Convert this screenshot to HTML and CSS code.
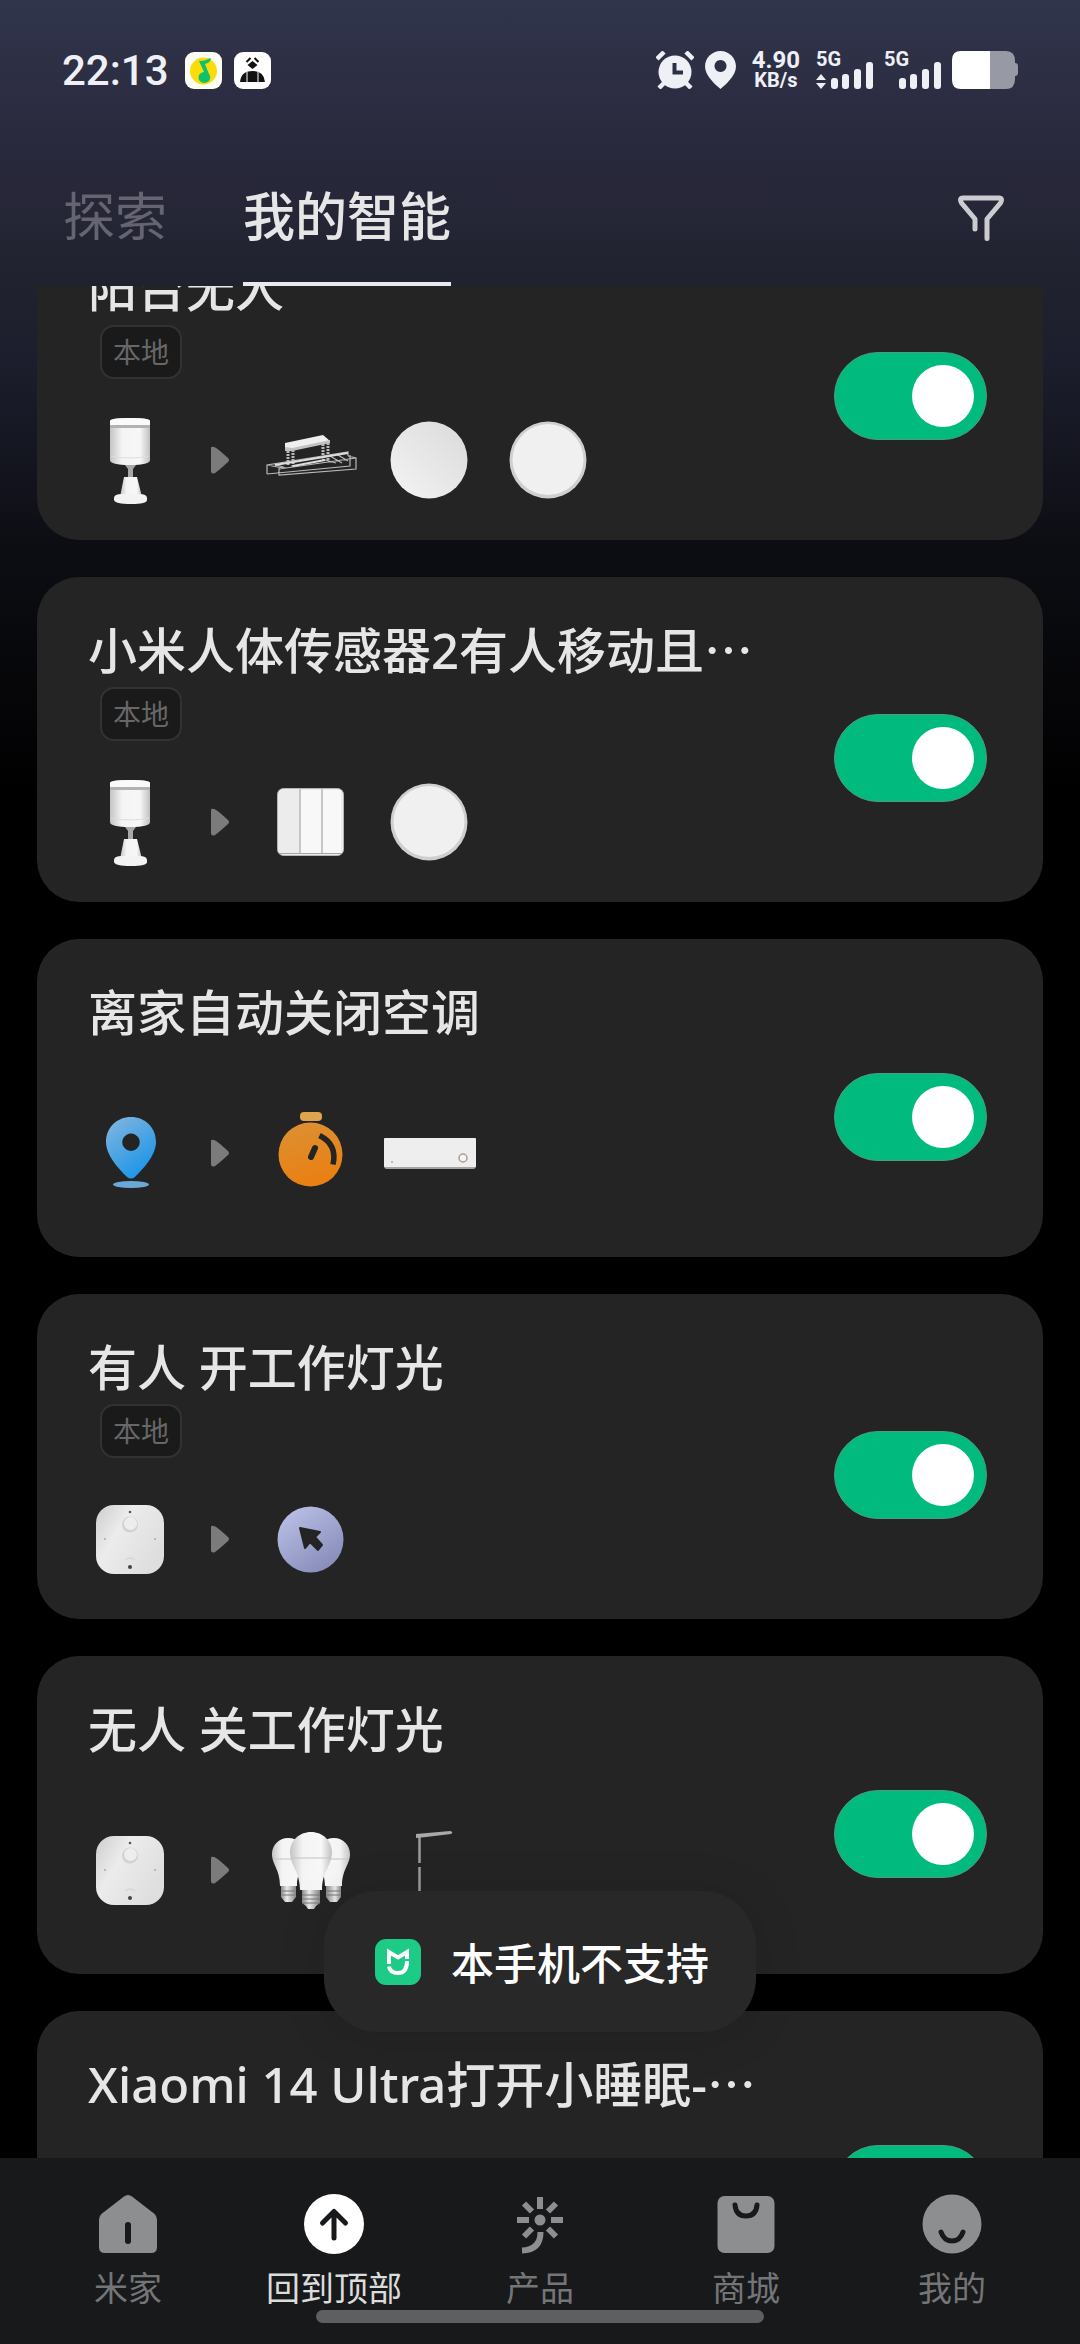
FILE: index.html
```html
<!DOCTYPE html>
<html lang="zh-CN">
<head>
  <meta charset="UTF-8" />
  <meta name="viewport" content="width=device-width, initial-scale=1.0" />
  <title>我的智能</title>
  <link rel="stylesheet" href="styles.css">
</head>
<body>
  <!-- Shared device icons -->
  <svg class="sprite" aria-hidden="true">
    <defs>
      <linearGradient id="g-body" x1="0" x2="1" y1="0" y2="0">
        <stop offset="0" stop-color="#c4c4c4" />
        <stop offset="0.3" stop-color="#f4f4f4" />
        <stop offset="0.75" stop-color="#f7f7f7" />
        <stop offset="1" stop-color="#c0c0c0" />
      </linearGradient>
      <linearGradient id="g-disc" x1="1" x2="0" y1="0" y2="1">
        <stop offset="0" stop-color="#dadada" />
        <stop offset="1" stop-color="#f4f4f4" />
      </linearGradient>
      <linearGradient id="g-pin" x1="0.2" x2="0.8" y1="0" y2="1">
        <stop offset="0" stop-color="#7db4de" />
        <stop offset="1" stop-color="#1492ea" />
      </linearGradient>
      <linearGradient id="g-timer" x1="0" x2="0.3" y1="0" y2="1">
        <stop offset="0" stop-color="#dc9136" />
        <stop offset="1" stop-color="#e98012" />
      </linearGradient>
      <linearGradient id="g-tap" x1="0.2" x2="0.9" y1="0" y2="1">
        <stop offset="0" stop-color="#b9bfe6" />
        <stop offset="1" stop-color="#8288b4" />
      </linearGradient>
      <linearGradient id="g-panel" x1="0" x2="1" y1="0" y2="0.6">
        <stop offset="0" stop-color="#cdcdcd" />
        <stop offset="0.4" stop-color="#ececec" />
        <stop offset="1" stop-color="#dedede" />
      </linearGradient>
      <linearGradient id="g-screw" x1="0" x2="1" y1="0" y2="0">
        <stop offset="0" stop-color="#8a8a8a" />
        <stop offset="0.4" stop-color="#ececec" />
        <stop offset="1" stop-color="#858585" />
      </linearGradient>
      <g id="side-bulb">
        <path fill="url(#g-screw)" d="M19 63h15v12l-4 5h-7l-4-5z" />
        <path fill="url(#g-body)" d="M26 16c10 0 17 7 17 16 0 12-8 16-8 32H18c0-17-8-21-8-32 0-9 7-16 16-16z" />
        <path stroke="#c4c4c4" d="M11 37h20" />
        <path stroke="#777" d="M20 69h13M20 73h13" />
      </g>
    </defs>

    <symbol id="motion" viewBox="0 0 96 96">
      <path fill="url(#g-body)" d="M28 9q0-3 20-3t20 3v39q0 5-20 5t-20-5z" />
      <path fill="#b2b2b2" d="M28 13h40v3H28z" />
      <path fill="#fafafa" d="M28 9q0-3 20-3t20 3v4H28z" />
      <path fill="none" stroke="#dedede" d="M29 44q19 4 38 0" />
      <path fill="#a8a8a8" d="M43 53h11l-3 4v9h-5v-9z" />
      <path fill="url(#g-body)" d="M42 65h13l5 20H38z" />
      <path fill="#f3f3f3" d="M32 86q0-4 8-4h17q8 0 8 4v2q0 4-16 4t-17-4z" />
    </symbol>

    <symbol id="rack" viewBox="0 0 96 96">
      <path fill="#efefef" d="M23 31l38-8 7 6-38 9h-7z" />
      <path fill="#c2c2c2" d="M23 35l7 1 38-8v3l-38 8h-7z" />
      <g fill="none" stroke="#b9b9b9" stroke-width="1.2">
        <path stroke-dasharray="2 1" stroke-width="3" d="M26 39v15M31 38v17M61 32v15M66 31v17" />
        <path d="M5 62v-9l81-13v4M5 53l16 3M5 62l83-8V43M17 56v7l77-6V46l-8-2M17 57l77-11M12 52l12 4M76 43l10 6M68 44l12 7M60 47l14 4" />
      </g>
      <path fill="none" stroke="#dedede" stroke-width="2" d="M13 53l73-12M31 54l32-6" />
    </symbol>

    <symbol id="ceiling" viewBox="0 0 96 96">
      <circle cx="48" cy="48" r="38.5" fill="url(#g-disc)" />
    </symbol>

    <symbol id="ceiling-ring" viewBox="0 0 96 96">
      <circle cx="48" cy="48" r="38.5" fill="#cfcfcf" />
      <circle cx="48" cy="47.5" r="35.5" fill="#f0f0f0" />
    </symbol>

    <symbol id="switch" viewBox="0 0 96 96">
      <rect x="15.5" y="14.5" width="66" height="67" rx="6" fill="#ececec" stroke="#b5b5b5" />
      <path fill="#f8f8f8" d="M39 16h20v63H39zM61 16h18v63H61z" />
      <path stroke="#b9b9b9" stroke-width="1.5" d="M38 15v65M60 15v65" />
      <path stroke="#a5a5a5" d="M17 79.5h63" />
    </symbol>

    <symbol id="place" viewBox="0 0 96 96">
      <path fill="url(#g-pin)" fill-rule="evenodd" d="M49 12c14 0 25 10.5 25 25 0 13-12 26-21 35q-4 3-8 0C36 63 24 50 24 37c0-14.5 11-25 25-25zm0 16.5a8.7 8.7 0 1 0 .01 0z" />
      <ellipse cx="49" cy="79.5" rx="18" ry="3.5" fill="#6aa8d8" />
    </symbol>

    <symbol id="timer" viewBox="0 0 96 96">
      <rect x="38" y="7" width="22" height="9" rx="4" fill="#dfa44e" />
      <circle cx="48.5" cy="49.5" r="32" fill="url(#g-timer)" />
      <path fill="none" stroke="#242424" stroke-width="6" stroke-linecap="round" d="M49 52l4-9" />
      <path fill="none" stroke="#242424" stroke-width="5.5" d="M57.5 30.5q18 9 13.5 29" />
    </symbol>

    <symbol id="aircon" viewBox="0 0 96 96">
      <path fill="#a3a3a3" d="M3 59h92v2q0 3-3 3H6q-3 0-3-3z" />
      <rect x="3" y="33" width="92" height="29" rx="1" fill="#eeeeee" />
      <circle cx="82" cy="53" r="4" fill="#f4f4f4" stroke="#b09c94" stroke-width="1.5" />
      <circle cx="11" cy="57" r="1" fill="#a9a9a9" />
    </symbol>

    <symbol id="presence" viewBox="0 0 96 96">
      <rect x="14" y="14" width="68" height="69" rx="18" fill="url(#g-panel)" />
      <circle cx="48" cy="33.5" r="8" fill="#d2d2d2" />
      <circle cx="48.5" cy="32.5" r="6.5" fill="#ededed" />
      <circle cx="48" cy="21" r="1.3" fill="#555" />
      <circle cx="48" cy="76" r="2" fill="#444" />
      <circle cx="23" cy="48" r="1" fill="#aaa" />
      <circle cx="73" cy="48" r="1" fill="#aaa" />
      <path fill="none" stroke="#cfcfcf" d="M43 69q5-4 10 0" />
    </symbol>

    <symbol id="tap" viewBox="0 0 96 96">
      <circle cx="48.5" cy="48.5" r="33" fill="url(#g-tap)" />
      <path fill="#242424" stroke="#242424" stroke-width="2" stroke-linejoin="round" d="M38 37l20 4-5 5 7 8-4 5-8-8-5 6z" />
    </symbol>

    <symbol id="bulbs" viewBox="0 0 96 96">
      <use href="#side-bulb" />
      <use href="#side-bulb" transform="matrix(-1 0 0 1 98 0)" />
      <path fill="url(#g-screw)" d="M40 67h18v14l-4 3-2 3h-6l-2-3-4-3z" />
      <path fill="url(#g-body)" d="M49 10c12 0 21 9 21 20 0 14-10 19-10 38H38c0-19-10-24-10-38 0-11 9-20 21-20z" />
      <path stroke="#c2c2c2" d="M29 36h40" />
      <path stroke="#777" d="M40 73h18M40 77h18M41 81h16" />
    </symbol>

    <symbol id="lamp" viewBox="0 0 96 96">
      <path stroke="#9b9b9b" stroke-width="2.5" d="M38.5 14v72" />
      <path stroke="#222" stroke-width="3" d="M38.5 41v4" />
      <path fill="#a9a9a9" d="M35 12l34-3q4 1 1 3l-25 3-10 1z" />
      <ellipse cx="42" cy="87" rx="14" ry="3" fill="#9b9b9b" />
    </symbol>

    <symbol id="arrow" viewBox="0 0 18 28">
      <path fill="#7b7b7b" d="M0 2q0-2 3-1 2 0 14 11 2 2 0 4Q5 27 3 27.5q-3 .5-3-2z" />
    </symbol>
  </svg>

  <div class="app">
    <header class="top">
      <div class="status-bar">
        <time class="clock">22:13</time>
        <svg class="notice" viewBox="0 0 37 37" width="37" height="37">
          <rect width="37" height="37" rx="9" fill="#fdfff4" />
          <circle cx="18.5" cy="19" r="13.5" fill="#fadc0a" />
          <path fill="#11c06c" d="M14 9q7 0 11-3l1 1q-1 4-6 5l4 10a6 5.5 0 1 1-5-2z" />
        </svg>
        <svg class="notice" viewBox="0 0 37 37" width="37" height="37">
          <rect width="37" height="37" rx="9" fill="#fff" />
          <path fill="#111" d="M18.5 9l5 4-5 4-5-4zM6 30q1-11 12.500-11T31 30z" />
          <path stroke="#111" stroke-width="2" d="M12.500 10l4-4M24.500 10l-4-4" />
          <path stroke="#fff" d="M13 20v10M24 20v10" />
        </svg>
        <div class="status-right">
          <svg viewBox="0 0 38 38" width="38" height="38">
            <circle cx="19" cy="21" r="16.5" fill="#eef0f6" />
            <path stroke="#eef0f6" stroke-width="4.5" d="M1 8l7-7M37 8l-7-7M3 37l6-6M35 37l-6-6" />
            <path fill="none" stroke="#2d3045" stroke-width="4" d="M18.5 12v9.5H27" />
          </svg>
          <svg viewBox="0 0 31 38" width="31" height="38">
            <path fill="#eef0f6" fill-rule="evenodd" d="M15.5 0C24 0 31 7 31 15.5 31 25 20 34 15.5 38 11 34 0 25 0 15.5 0 7 7 0 15.5 0zm0 9a6 6 0 1 0 .01 0z" />
          </svg>
          <div class="speed">
            <span class="rate">4.90</span>
            <span class="unit">KB/s</span>
          </div>
          <div class="signal">
            <span class="network">5G</span>
            <svg viewBox="0 0 57 27" width="57" height="27" fill="#eef0f6">
              <path d="M5 12l5 6H0zM5 27l5-6H0z" />
              <rect x="15" y="16" width="7" height="11" rx="3" />
              <rect x="26" y="12" width="7" height="15" rx="3" />
              <rect x="38" y="7" width="7" height="20" rx="3" />
              <rect x="50" y="0" width="7" height="27" rx="3" />
            </svg>
          </div>
          <div class="signal">
            <span class="network">5G</span>
            <svg viewBox="0 0 57 27" width="57" height="27" fill="#eef0f6">
              <rect x="15" y="16" width="7" height="11" rx="3" />
              <rect x="26" y="12" width="7" height="15" rx="3" />
              <rect x="38" y="7" width="7" height="20" rx="3" />
              <rect x="50" y="0" width="7" height="27" rx="3" />
            </svg>
          </div>
          <svg viewBox="0 0 66 38" width="66" height="38">
            <path fill="#9799a5" d="M38 0h16q9 0 9 10v2q3 0 3 3v7q0 3-3 3v3q0 10-9 10H38z" />
            <path fill="#fff" d="M9 0h29v38H9q-9 0-9-9V9q0-9 9-9z" />
          </svg>
        </div>
      </div>

      <div class="tabs">
        <a class="tab" href="#explore">探索</a>
        <a class="tab active" href="#mine">我的智能</a>
        <button class="filter" type="button" aria-label="筛选">
          <svg viewBox="0 0 46 46" width="46" height="46" fill="none" stroke="#cbccd2" stroke-width="5" stroke-linecap="round" stroke-linejoin="round">
            <path d="M17 34V24L3.5 8Q1 3 5 3h36q4 0 1.5 5L29 24v19.5" />
          </svg>
        </button>
      </div>
    </header>

    <main class="scenes">
      <article class="card scrolled">
        <div class="info">
          <h2 id="s1">阳台无人</h2>
          <span class="badge">本地</span>
          <div class="flow">
            <svg class="device"><use href="#motion" /></svg>
            <svg class="then"><use href="#arrow" /></svg>
            <svg class="device"><use href="#rack" /></svg>
            <svg class="device"><use href="#ceiling" /></svg>
            <svg class="device"><use href="#ceiling-ring" /></svg>
          </div>
        </div>
        <input class="toggle" type="checkbox" role="switch" aria-labelledby="s1" checked />
      </article>

      <article class="card">
        <div class="info">
          <h2 id="s2">小米人体传感器2有人移动且⋯</h2>
          <span class="badge">本地</span>
          <div class="flow">
            <svg class="device"><use href="#motion" /></svg>
            <svg class="then"><use href="#arrow" /></svg>
            <svg class="device"><use href="#switch" /></svg>
            <svg class="device"><use href="#ceiling-ring" /></svg>
          </div>
        </div>
        <input class="toggle" type="checkbox" role="switch" aria-labelledby="s2" checked />
      </article>

      <article class="card">
        <div class="info">
          <h2 id="s3">离家自动关闭空调</h2>
          <div class="flow roomy">
            <svg class="device"><use href="#place" /></svg>
            <svg class="then"><use href="#arrow" /></svg>
            <svg class="device"><use href="#timer" /></svg>
            <svg class="device"><use href="#aircon" /></svg>
          </div>
        </div>
        <input class="toggle" type="checkbox" role="switch" aria-labelledby="s3" checked />
      </article>

      <article class="card">
        <div class="info">
          <h2 id="s4">有人 开工作灯光</h2>
          <span class="badge">本地</span>
          <div class="flow">
            <svg class="device"><use href="#presence" /></svg>
            <svg class="then"><use href="#arrow" /></svg>
            <svg class="device"><use href="#tap" /></svg>
          </div>
        </div>
        <input class="toggle" type="checkbox" role="switch" aria-labelledby="s4" checked />
      </article>

      <article class="card">
        <div class="info">
          <h2 id="s5">无人 关工作灯光</h2>
          <div class="flow roomy">
            <svg class="device"><use href="#presence" /></svg>
            <svg class="then"><use href="#arrow" /></svg>
            <svg class="device"><use href="#bulbs" /></svg>
            <svg class="device"><use href="#lamp" /></svg>
          </div>
        </div>
        <input class="toggle" type="checkbox" role="switch" aria-labelledby="s5" checked />
      </article>

      <article class="card">
        <div class="info">
          <h2 id="s6">Xiaomi 14 Ultra打开小睡眠-⋯</h2>
          <div class="flow roomy"></div>
        </div>
        <input class="toggle" type="checkbox" role="switch" aria-labelledby="s6" checked />
      </article>
    </main>

    <nav class="bottom-nav">
      <a class="nav-item" href="#home">
        <svg viewBox="0 0 60 60" width="60" height="60">
          <path fill="#8d8e90" d="M26 2.5q4-3 8 0l22 17q3 2.5 3 6V53q0 6-6 6H7q-6 0-6-6V25.5q0-3.5 3-6z" />
          <path stroke="#18191b" stroke-width="6" stroke-linecap="round" d="M30 31v16" />
        </svg>
        <span>米家</span>
      </a>
      <a class="nav-item current" href="#top">
        <svg viewBox="0 0 60 60" width="60" height="60">
          <circle cx="30" cy="30" r="30" fill="#fff" />
          <path fill="none" stroke="#18191b" stroke-width="5" stroke-linecap="round" stroke-linejoin="round" d="M30 44V17.5M18.5 29L30 17.5 41.5 29" />
        </svg>
        <span>回到顶部</span>
      </a>
      <a class="nav-item" href="#products">
        <svg viewBox="0 0 60 60" width="60" height="60" fill="none" stroke="#8d8e90" stroke-width="6">
          <circle cx="30" cy="26" r="5.5" fill="#8d8e90" stroke="none" />
          <path d="M30 3v12M7 26h12M41 26h12M14 9.5l8 8M46 9.5l-8 8M14 42.5l8-8M46 42.5l-8-8" />
          <path d="M30.5 38q0 18-18.5 18.5" />
        </svg>
        <span>产品</span>
      </a>
      <a class="nav-item" href="#shop">
        <svg viewBox="0 0 60 60" width="60" height="60">
          <rect x="1.5" y="2" width="57" height="57" rx="7" fill="#8d8e90" />
          <path fill="none" stroke="#18191b" stroke-width="5" stroke-linecap="round" d="M19 11q1 11 11 11t11-11" />
        </svg>
        <span>商城</span>
      </a>
      <a class="nav-item" href="#me">
        <svg viewBox="0 0 60 60" width="60" height="60">
          <circle cx="30" cy="30" r="29.5" fill="#8d8e90" />
          <path fill="none" stroke="#18191b" stroke-width="5" stroke-linecap="round" d="M19 38q3 9 11 9t11-9" />
        </svg>
        <span>我的</span>
      </a>
      <div class="home-bar"></div>
    </nav>

    <div class="toast" role="status">
      <svg viewBox="0 0 46 46" width="46" height="46">
        <rect width="46" height="46" rx="11" fill="#1dca86" />
        <path fill="none" stroke="#fff" stroke-width="4" d="M14 25V13l9 5.5 9-5.5v7M14 27.5Q15 34 23 34q9 0 9-12" />
      </svg>
      <span>本手机不支持</span>
    </div>
  </div>
</body>
</html>
```
FILE: styles.css
```css
* {
  box-sizing: border-box;
}
body {
  margin: 0;
  font-family: "Noto Sans", "Noto Sans CJK SC", sans-serif;
  background-color: #000;
  color: #e6e6e6;
}
a {
  color: inherit;
  text-decoration: none;
}
svg {
  display: block;
  flex: none;
}
.sprite {
  position: absolute;
  width: 0;
  height: 0;
}
.app {
  position: relative;
  height: 100vh;
  display: flex;
  flex-direction: column;
  background: linear-gradient(#30354b 0, #2b2b40 120px, #21222f 280px, #1c1e2d 360px, #0d0e14 540px, #000 800px);
}

/* Status bar */
.status-bar {
  display: flex;
  align-items: center;
  gap: 12px;
  height: 140px;
  padding: 0 62px;
  font-family: Roboto, sans-serif;
  color: #eef0f6;
}
.clock {
  font-size: 42px;
  font-weight: 500;
  margin-right: 4px;
}
.status-right {
  display: flex;
  align-items: center;
  gap: 11px;
  margin-left: auto;
}
.speed {
  display: flex;
  flex-direction: column;
  align-items: center;
  font-weight: 700;
  line-height: 20px;
  margin: 0 5px;
}
.rate {
  font-size: 24px;
}
.unit {
  font-size: 20px;
}
.signal {
  position: relative;
  height: 38px;
  display: flex;
  align-items: flex-end;
}
.network {
  position: absolute;
  top: 0;
  left: 0;
  font-size: 20px;
  font-weight: 700;
  line-height: 16px;
}

/* Tabs */
.tabs {
  display: flex;
  align-items: center;
  height: 146px;
  padding: 10px 76px 0 63px;
  gap: 76px;
}
.tab {
  font-size: 52px;
  line-height: 132px;
  color: #646571;
  border-bottom: 4px solid transparent;
}
.tab.active {
  font-weight: 500;
  color: #e6e6e6;
  border-color: #e9eaf0;
}
.filter {
  margin-left: auto;
  padding: 0;
  border: none;
  background: none;
  cursor: pointer;
}

/* Scene list */
.scenes {
  flex: 1;
  min-height: 0;
  overflow: hidden;
  display: flex;
  flex-direction: column;
  gap: 37px;
  padding: 0 37px;
}
.card {
  flex: none;
  display: flex;
  align-items: center;
  padding: 37px 56px 0 45px;
  border-radius: 42px;
  background-color: #242424;
}
.scrolled {
  margin-top: -71px;
}
.info {
  flex: 1;
  min-width: 0;
}
.card h2 {
  margin: 0 0 0 6px;
  font-size: 49px;
  font-weight: 500;
  line-height: 73px;
  white-space: nowrap;
}
.badge {
  display: block;
  width: fit-content;
  margin-left: 18px;
  padding: 0 11px;
  border: 2px solid #323232;
  border-radius: 14px;
  background-color: #1a1a1a;
  color: #676767;
  font-size: 28px;
  line-height: 50px;
}
.flow {
  display: flex;
  align-items: center;
  gap: 23px;
  height: 96px;
  margin: 33px 0 32px;
}
.flow.roomy {
  margin: 56px 0;
}
.device {
  width: 96px;
  height: 96px;
}
.then {
  width: 18px;
  height: 28px;
  margin: 0 10px;
}
.toggle {
  appearance: none;
  display: grid;
  align-items: center;
  width: 153px;
  height: 88px;
  margin: 0;
  padding: 0 12px;
  border: 1px solid #4d9d7d;
  border-radius: 44px;
  background-color: #4a4a4a;
  cursor: pointer;
}
.toggle::before {
  content: "";
  width: 62px;
  height: 62px;
  border-radius: 50%;
  background-color: #fff;
}
.toggle:checked {
  justify-items: end;
  background-color: #00bb7d;
}

/* Bottom navigation */
.bottom-nav {
  position: relative;
  display: grid;
  grid-template-columns: repeat(5, 1fr);
  height: 186px;
  padding: 36px 25px 0;
  background-color: #18191b;
}
.nav-item {
  display: flex;
  flex-direction: column;
  align-items: center;
  gap: 10px;
  font-size: 34px;
  line-height: 48px;
  color: #747577;
}
.nav-item.current {
  color: #dcdcdc;
}
.home-bar {
  position: absolute;
  bottom: 21px;
  left: 50%;
  width: 448px;
  height: 13px;
  margin-left: -224px;
  border-radius: 7px;
  background-color: #5e5f61;
}

/* Toast */
.toast {
  position: absolute;
  bottom: 312px;
  left: 50%;
  transform: translateX(-50%);
  display: flex;
  align-items: center;
  gap: 30px;
  height: 141px;
  padding: 0 47px 0 51px;
  border-radius: 54px;
  background-color: #282828;
  box-shadow: 0 4px 50px rgba(0, 0, 0, 0.12);
  color: #fff;
  font-size: 43px;
  font-weight: 500;
  white-space: nowrap;
}
```
